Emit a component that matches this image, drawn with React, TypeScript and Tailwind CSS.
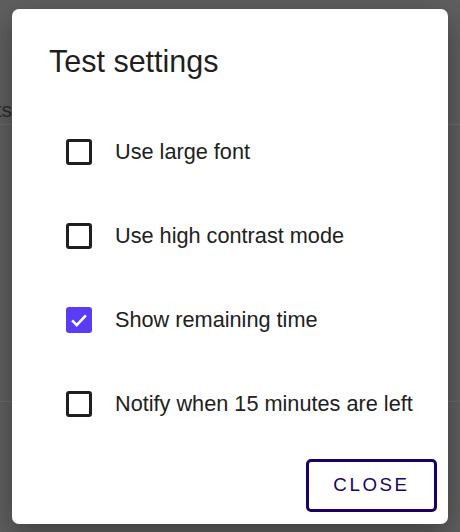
import React, { useState } from "react";

const options = [
  { id: "large", label: "Use large font", checked: false },
  { id: "contrast", label: "Use high contrast mode", checked: false },
  { id: "time", label: "Show remaining time", checked: true },
  { id: "notify", label: "Notify when 15 minutes are left", checked: false },
];

const CheckBox: React.FC<{ checked: boolean }> = ({ checked }) =>
  checked ? (
    <span className="flex h-[26px] w-[26px] items-center justify-center rounded-[3px] bg-[#5b3cf6]">
      <svg viewBox="0 0 24 24" className="h-[22px] w-[22px]" fill="none">
        <path d="M4.5 12.5l5 5L19.5 7" stroke="#fff" strokeWidth="2.8" />
      </svg>
    </span>
  ) : (
    <span className="block h-[26px] w-[26px] rounded-[3px] border-[3px] border-[#1f1f1f]" />
  );

export default function App() {
  const [values, setValues] = useState(options.map((o) => o.checked));

  return (
    <div
      className="relative h-[532px] w-[460px] overflow-hidden bg-[#5f5f5f]"
      style={{ fontFamily: '"Liberation Sans", Arial, sans-serif' }}
    >
      {/* page behind the backdrop */}
      <div className="pt-[94px] text-[21px] text-[#2c2c2c]">
        <div className="-ml-[58px] h-[30px] whitespace-nowrap">Results</div>
        <div className="h-px bg-[#6a6a6a]" />
        <div className="mt-[276px] h-px bg-[#6a6a6a]" />
      </div>

      <div className="absolute left-[12px] top-[9px] flex h-[515px] w-[436px] flex-col rounded-[7px] bg-white shadow-[0_10px_30px_rgba(0,0,0,0.35)]">
        <h2 className="pl-[37px] pt-[34px] text-[30.5px] leading-[36px] text-[#1f1f1f]">
          Test settings
        </h2>
        <ul className="mt-[31px] pl-[54px]">
          {options.map((o, i) => (
            <li key={o.id} className="flex h-[84px] items-center">
              <button
                className="flex items-center gap-[23px] text-[21.7px] text-[#212121]"
                onClick={() =>
                  setValues((v) => v.map((x, j) => (j === i ? !x : x)))
                }
              >
                <CheckBox checked={values[i]} />
                <span>{o.label}</span>
              </button>
            </li>
          ))}
        </ul>
        <div className="mt-auto flex justify-end pb-[12px] pr-[11px]">
          <button className="h-[53px] w-[131px] rounded-[5px] border-[3px] border-[#1b0066] text-[18.7px] tracking-[2.6px] text-[#1b0066]">
            CLOSE
          </button>
        </div>
      </div>
    </div>
  );
}
